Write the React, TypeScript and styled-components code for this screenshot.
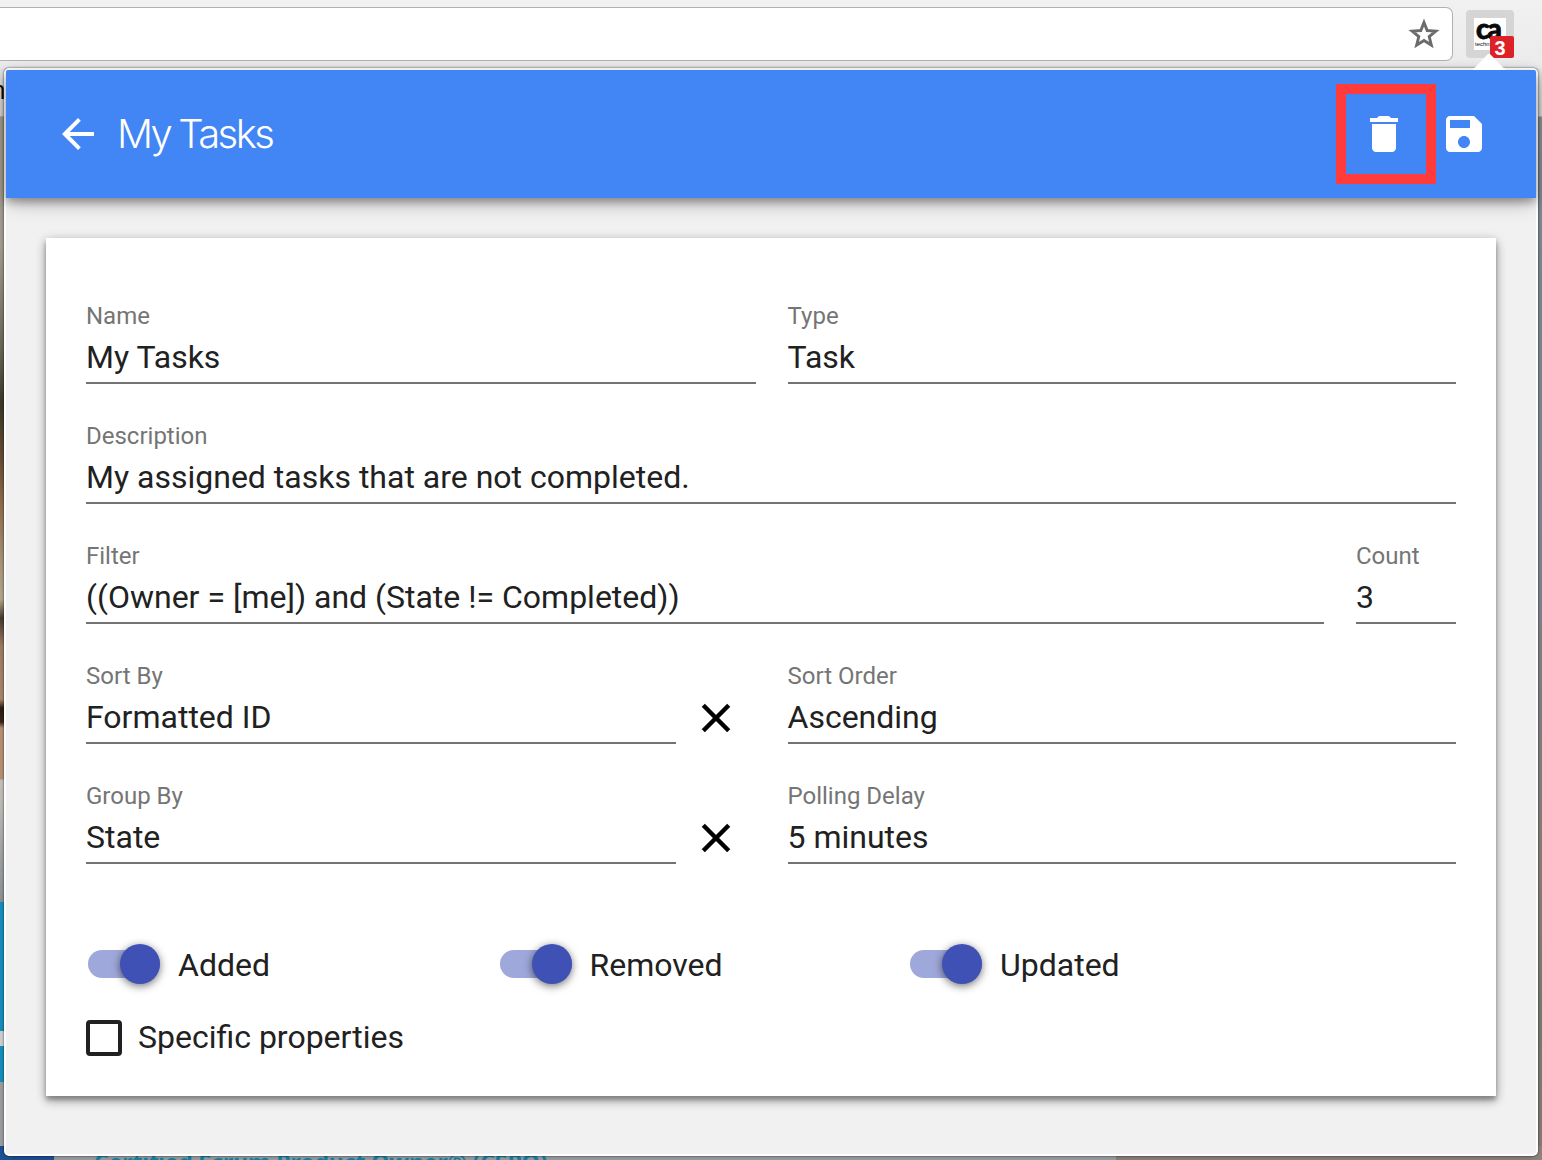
import React, { useState } from 'react';
import styled, { createGlobalStyle } from 'styled-components';

const Global = createGlobalStyle`
  *, *::before, *::after { box-sizing: border-box; }
  html, body { margin: 0; padding: 0; overflow: hidden; }
  body { background: #f0f0f0; font-family: Roboto, "Noto Sans", sans-serif; }
`;

const Screen = styled.div`
  position: relative;
  display: flex;
  flex-direction: column;
  width: 1542px;
  height: 1160px;
  overflow: hidden;
`;

const Toolbar = styled.div`
  display: flex;
  flex: none;
  align-items: flex-start;
  height: 68px;
  padding-top: 7px;
  background: linear-gradient(#f1f1f1, #ebebeb);
`;

const AddressBar = styled.div`
  display: flex;
  align-items: center;
  justify-content: flex-end;
  width: 1453px;
  height: 54px;
  padding-right: 12px;
  background: #fff;
  border: 1px solid #b0b0b0;
  border-left: 0;
  border-radius: 0 7px 7px 0;
`;

const ExtensionButton = styled.div`
  position: relative;
  display: flex;
  align-items: flex-start;
  justify-content: center;
  width: 48px;
  height: 48px;
  margin: 3px 0 0 13px;
  padding-top: 8px;
  background: #d5d5d5;
  border-radius: 4px;
`;

const Logo = styled.div`
  display: flex;
  flex-direction: column;
  align-items: flex-start;
  width: 32px;
  height: 32px;
  background: #fff;
  color: #0a0a0a;
`;

const LogoMark = styled.span`
  height: 22px;
  padding-left: 2px;
  font: 900 28px/21px Lato, sans-serif;
  letter-spacing: -2px;
  -webkit-text-stroke: 0.8px #0a0a0a;
`;

const LogoName = styled.span`
  padding-left: 1px;
  font: 6px/8px "Liberation Sans", sans-serif;
`;

const Badge = styled.span`
  position: absolute;
  right: 0;
  bottom: 0;
  width: 24px;
  height: 22px;
  padding-right: 4px;
  border-radius: 2px;
  background: #dc2127;
  color: #fff;
  font: bold 20px/24px "Liberation Sans", sans-serif;
  text-align: center;
`;

const BookmarksBar = styled.div`
  flex: none;
  height: 49px;
  background: linear-gradient(#e6e6e6, #dcdcdc);
  border-bottom: 1px solid #b4b4b4;
  color: #111;
  font: 26px/44px "Liberation Sans", sans-serif;
`;

const BookmarkText = styled.span`
  display: block;
  margin-left: -9px;
`;

const WebPage = styled.div`
  display: flex;
  flex: 1;
  flex-direction: column;
`;

const PageBody = styled.div`
  display: flex;
  flex: 1;
  justify-content: space-between;
`;

const LeftEdge = styled.div`
  width: 5px;
  background: linear-gradient(
    #a9a295 0, #a9a295 130px, #6b6a58 233px, #3d3a2a 287px, #6b5038 342px,
    #94704e 386px, #b0a084 452px, #bcae90 482px, #4a3c32 501px, #a58066 529px,
    #b08c70 582px, #2b1d14 591px, #3a281c 605px, #c0967a 611px, #bd9878 662px,
    #d0cac5 663px, #c5c2be 690px, #a5a8aa 740px, #93979a 785px,
    #1894c6 785px, #1894c6 914px, #d6d9da 914px, #d6d9da 929px,
    #1894c6 929px, #1894c6 965px, #a2a5a8 965px, #a2a5a8 100%);
`;

const RightEdge = styled.div`
  width: 5px;
  background: linear-gradient(#89969b 0, #7c8e94 160px, #818b98 400px, #868489 580px, #8e837b 750px, #7f7f72 900px, #8c8175 1030px);
`;

const PageFooter = styled.div`
  display: grid;
  grid-template-columns: 54px 1062px 1fr;
  height: 14px;
`;

const FooterBlock = styled.div<{ $color: string }>`
  overflow: hidden;
  background: ${(p) => p.$color};
`;

const FooterHeading = styled.div`
  padding-left: 40px;
  color: #168bb3;
  font: bold 23px/32px "Noto Sans", sans-serif;
  letter-spacing: -0.1px;
  white-space: nowrap;
`;

const Popup = styled.main`
  position: absolute;
  top: 68px;
  left: 4px;
  width: 1534px;
  height: 1088px;
  border: 2px solid #fff;
  border-radius: 5px;
  background: #f1f1f1;
  box-shadow: 0 0 2px rgba(0, 0, 0, 0.75), 0 3px 12px rgba(0, 0, 0, 0.2);
`;

const Pointer = styled.svg`
  position: absolute;
  top: -17px;
  left: 1466px;
`;

const Header = styled.header`
  position: relative;
  display: flex;
  align-items: center;
  height: 128px;
  padding: 0 48px;
  border-radius: 2px 2px 0 0;
  background: #4285f4;
  box-shadow: 0 4px 8px rgba(0, 0, 0, 0.3), 0 8px 18px -3px rgba(0, 0, 0, 0.26);
  color: #fff;
`;

const Title = styled.h1`
  flex: 1;
  margin: 0 0 0 15px;
  font: 300 40px/48px Inter, Roboto, sans-serif;
  letter-spacing: -2.6px;
  word-spacing: -0.5px;
`;

const IconButton = styled.button`
  display: flex;
  padding: 0;
  border: 0;
  background: none;
  color: inherit;
  cursor: pointer;
`;

const Highlight = styled.div`
  display: flex;
  align-items: center;
  justify-content: center;
  width: 100px;
  height: 100px;
  margin-right: 4.5px;
  padding-right: 4px;
  border: 10px solid #ff3b3b;
`;

const Card = styled.section`
  display: flex;
  flex-direction: column;
  height: 858px;
  margin: 40px;
  padding: 56px 40px 0;
  background: #fff;
  box-shadow: 0 4px 4px rgba(0, 0, 0, 0.24), 0 2px 10px rgba(0, 0, 0, 0.24), 0 6px 10px rgba(0, 0, 0, 0.18);
`;

const Row = styled.div<{ $columns: string }>`
  display: grid;
  grid-template-columns: ${(p) => p.$columns};
  justify-content: space-between;
  flex: none;
  height: 120px;
`;

const FieldGroup = styled.div`
  display: grid;
  grid-template-columns: 590px 80px;
`;

const FieldBox = styled.label`
  display: flex;
  flex-direction: column;
  height: 90px;
  border-bottom: 2px solid #737373;
`;

const FieldLabel = styled.span`
  height: 40px;
  color: #757575;
  font-size: 24px;
  line-height: 44px;
  white-space: nowrap;
`;

const FieldValue = styled.span`
  height: 48px;
  color: #212121;
  font-size: 32px;
  line-height: 46px;
  white-space: nowrap;
`;

const ClearCell = styled.div`
  display: flex;
  justify-content: center;
  padding-top: 40px;
  color: #000;
`;

const Toggles = styled.div`
  display: grid;
  grid-template-columns: 411.5px 410.5px 1fr;
  flex: none;
  height: 40px;
  margin-top: 50px;
`;

const ToggleBox = styled.label`
  display: flex;
  align-items: center;
  gap: 18px;
  height: 40px;
  padding-left: 2px;
  color: #212121;
  font-size: 32px;
  line-height: 38px;
  cursor: pointer;
`;

const ToggleText = styled.span`
  padding-top: 2px;
`;

const Track = styled.span<{ $on: boolean }>`
  display: flex;
  align-items: center;
  justify-content: ${(p) => (p.$on ? 'flex-end' : 'flex-start')};
  width: 72px;
  height: 28px;
  border-radius: 14px;
  background: ${(p) => (p.$on ? '#9fa8da' : '#bdbdbd')};
`;

const Knob = styled.span<{ $on: boolean }>`
  width: 40px;
  height: 40px;
  flex: none;
  border-radius: 50%;
  background: ${(p) => (p.$on ? '#3f51b5' : '#fafafa')};
  box-shadow: 0 2px 8px rgba(0, 0, 0, 0.55);
`;

const CheckRow = styled.label`
  display: flex;
  align-items: center;
  gap: 16px;
  height: 36px;
  margin-top: 36px;
  color: #212121;
  font-size: 32px;
  line-height: 36px;
  cursor: pointer;
`;

const CheckBox = styled.span`
  width: 36px;
  height: 36px;
  border: 4px solid #212121;
  border-radius: 4px;
`;

const CheckText = styled.span`
  margin-top: -2px;
`;

function Icon({ d, weight = 0 }: { d: string; weight?: number }) {
  return (
    <svg width="48" height="48" viewBox="0 0 24 24" fill="currentColor" stroke="currentColor" strokeWidth={weight} aria-hidden="true">
      <path d={d} />
    </svg>
  );
}

const ICONS = {
  back: 'M20 11H7.83l5.59-5.59L12 4l-8 8 8 8 1.41-1.41L7.83 13H20v-2z',
  trash: 'M6 19c0 1.1.9 2 2 2h8c1.1 0 2-.9 2-2V7H6v12zM19 4h-3.5l-1-1h-5l-1 1H5v2h14V4z',
  save: 'M17 3H5c-1.11 0-2 .9-2 2v14c0 1.1.89 2 2 2h14c1.1 0 2-.9 2-2V7l-4-4zm-5 16c-1.66 0-3-1.34-3-3s1.34-3 3-3 3 1.34 3 3-1.34 3-3 3zm3-10H5V5h10v4z',
  clear: 'M19 6.41L17.59 5 12 10.59 6.41 5 5 6.41 10.59 12 5 17.59 6.41 19 12 13.41 17.59 19 19 17.59 13.41 12z',
};

function Field({ label, value }: { label: string; value: string }) {
  return (
    <FieldBox>
      <FieldLabel>{label}</FieldLabel>
      <FieldValue>{value}</FieldValue>
    </FieldBox>
  );
}

function ClearableField({ label, value }: { label: string; value: string }) {
  return (
    <FieldGroup>
      <Field label={label} value={value} />
      <ClearCell>
        <IconButton>
          <Icon d={ICONS.clear} weight={0.25} />
        </IconButton>
      </ClearCell>
    </FieldGroup>
  );
}

function Toggle({ label }: { label: string }) {
  const [on, setOn] = useState(true);
  return (
    <ToggleBox onClick={() => setOn(!on)}>
      <Track $on={on}>
        <Knob $on={on} />
      </Track>
      <ToggleText>{label}</ToggleText>
    </ToggleBox>
  );
}

export default function App() {
  return (
    <>
      <Global />
      <Screen>
        <Toolbar>
          <AddressBar>
            <svg width="32" height="32" viewBox="0 0 32 32" fill="none" stroke="#6b6b6b" strokeWidth="2.9" aria-hidden="true">
              <path d="M16 4.5l3.2 8 8.6.6-6.6 5.5 2.1 8.4L16 22.4 8.7 27l2.1-8.4-6.6-5.5 8.6-.6z" />
            </svg>
          </AddressBar>
          <ExtensionButton>
            <Logo>
              <LogoMark>ca</LogoMark>
              <LogoName>techn</LogoName>
            </Logo>
            <Badge>3</Badge>
          </ExtensionButton>
        </Toolbar>
        <BookmarksBar>
          <BookmarkText>n</BookmarkText>
        </BookmarksBar>
        <WebPage>
          <PageBody>
            <LeftEdge />
            <RightEdge />
          </PageBody>
          <PageFooter>
            <FooterBlock $color="#1d559c" />
            <FooterBlock $color="#a3a9ab">
              <FooterHeading>Certified Scrum Product Owner® (CSPO)</FooterHeading>
            </FooterBlock>
            <FooterBlock $color="#93897f" />
          </PageFooter>
        </WebPage>

        <Popup>
          <Header>
            <IconButton>
              <Icon d={ICONS.back} />
            </IconButton>
            <Title>My Tasks</Title>
            <Highlight>
              <IconButton>
                <Icon d={ICONS.trash} />
              </IconButton>
            </Highlight>
            <IconButton>
              <Icon d={ICONS.save} />
            </IconButton>
          </Header>
          <Pointer width="34" height="17" viewBox="0 0 34 17" aria-hidden="true">
            <path d="M1 17V15.5L3 14.5L15.5 1.5Q17 0 18.5 1.5L31 14.5L33 15.5V17z" fill="#fff" />
          </Pointer>
          <Card>
            <Row $columns="670px 668.4px">
              <Field label="Name" value="My Tasks" />
              <Field label="Type" value="Task" />
            </Row>
            <Row $columns="1fr">
              <Field label="Description" value="My assigned tasks that are not completed." />
            </Row>
            <Row $columns="1238px 100px">
              <Field label="Filter" value="((Owner = [me]) and (State != Completed))" />
              <Field label="Count" value="3" />
            </Row>
            <Row $columns="670px 668.5px">
              <ClearableField label="Sort By" value="Formatted ID" />
              <Field label="Sort Order" value="Ascending" />
            </Row>
            <Row $columns="670px 668.5px">
              <ClearableField label="Group By" value="State" />
              <Field label="Polling Delay" value="5 minutes" />
            </Row>
            <Toggles>
              <Toggle label="Added" />
              <Toggle label="Removed" />
              <Toggle label="Updated" />
            </Toggles>
            <CheckRow>
              <CheckBox />
              <CheckText>Specific properties</CheckText>
            </CheckRow>
          </Card>
        </Popup>
      </Screen>
    </>
  );
}
